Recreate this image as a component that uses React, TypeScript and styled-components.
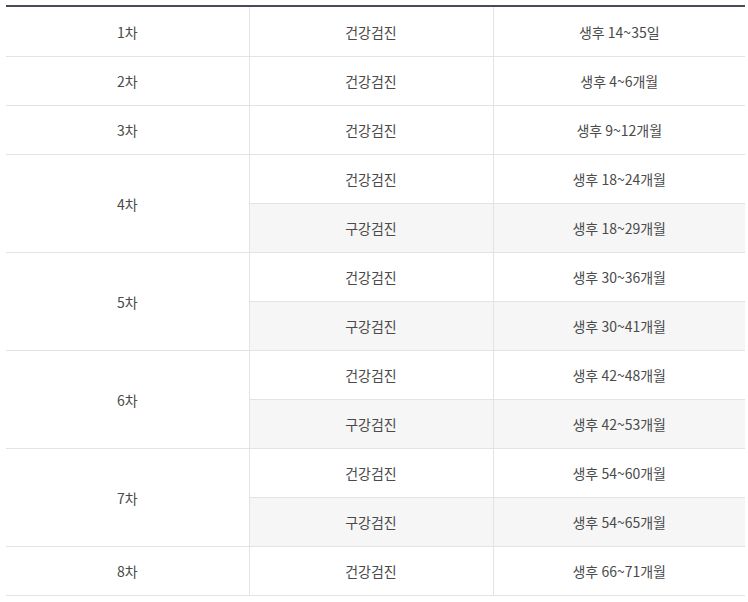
import React from "react";
import styled, { createGlobalStyle } from "styled-components";

const Global = createGlobalStyle`
  html, body { margin: 0; padding: 0; background: #fff; }
  body { font-family: "Noto Sans CJK KR", "Noto Sans", sans-serif; }
`;

const Wrap = styled.div`
  padding: 5px 3px 0 6px;
`;

const Table = styled.table`
  width: 739px;
  border-collapse: collapse;
  border-top: 2px solid #4b4b58;
  border-bottom: 1px solid #c9c9c9;
  table-layout: fixed;
`;

const Cell = styled.td<{ $shade?: boolean; $first?: boolean }>`
  height: 48px;
  padding: 0;
  text-align: center;
  vertical-align: middle;
  font-size: 14px;
  color: #4a4a4a;
  letter-spacing: 0;
  border-bottom: 1px solid #e3e3e3;
  border-left: ${(p) => (p.$first ? "none" : "1px solid #e3e3e3")};
  background: ${(p) => (p.$shade ? "#f6f6f6" : "#fff")};
`;

const FirstRow = styled.tr`
  & > td {
    height: 49px;
  }
`;

const Row = styled.tr``;

type Item = { kind: string; age: string };
type Group = { no: string; items: Item[] };

const data: Group[] = [
  { no: "1차", items: [{ kind: "건강검진", age: "생후 14~35일" }] },
  { no: "2차", items: [{ kind: "건강검진", age: "생후 4~6개월" }] },
  { no: "3차", items: [{ kind: "건강검진", age: "생후 9~12개월" }] },
  {
    no: "4차",
    items: [
      { kind: "건강검진", age: "생후 18~24개월" },
      { kind: "구강검진", age: "생후 18~29개월" },
    ],
  },
  {
    no: "5차",
    items: [
      { kind: "건강검진", age: "생후 30~36개월" },
      { kind: "구강검진", age: "생후 30~41개월" },
    ],
  },
  {
    no: "6차",
    items: [
      { kind: "건강검진", age: "생후 42~48개월" },
      { kind: "구강검진", age: "생후 42~53개월" },
    ],
  },
  {
    no: "7차",
    items: [
      { kind: "건강검진", age: "생후 54~60개월" },
      { kind: "구강검진", age: "생후 54~65개월" },
    ],
  },
  { no: "8차", items: [{ kind: "건강검진", age: "생후 66~71개월" }] },
];

export default function App() {
  return (
    <>
      <Global />
      <Wrap>
        <Table>
          <colgroup>
            <col style={{ width: "243px" }} />
            <col style={{ width: "244px" }} />
            <col />
          </colgroup>
          <tbody>
            {data.map((g, gi) =>
              g.items.map((it, i) => {
                const shade = it.kind === "구강검진";
                const R = gi === 0 && i === 0 ? FirstRow : Row;
                return (
                  <R key={g.no + i}>
                    {i === 0 && (
                      <Cell $first rowSpan={g.items.length}>
                        {g.no}
                      </Cell>
                    )}
                    <Cell $shade={shade}>{it.kind}</Cell>
                    <Cell $shade={shade}>{it.age}</Cell>
                  </R>
                );
              })
            )}
          </tbody>
        </Table>
      </Wrap>
    </>
  );
}
